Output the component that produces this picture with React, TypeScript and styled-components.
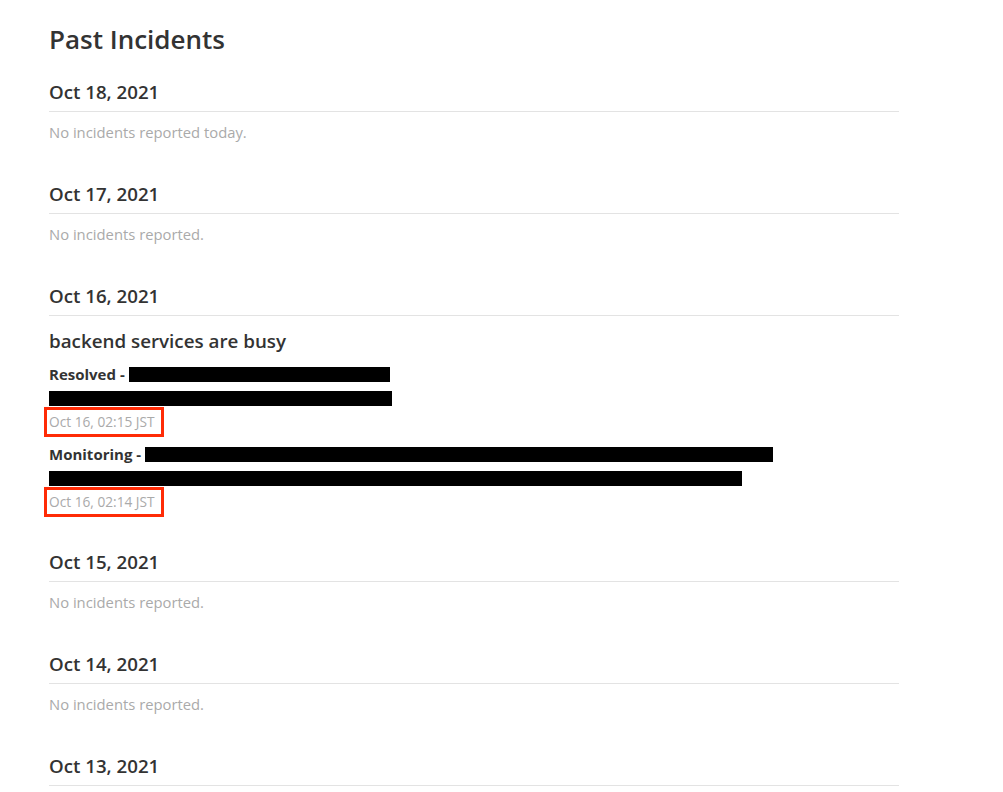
import React from "react";
import styled, { createGlobalStyle } from "styled-components";

const GlobalStyle = createGlobalStyle`
  html, body {
    margin: 0;
    padding: 0;
    background: #ffffff;
  }
  body {
    font-family: "Open Sans", "Liberation Sans", sans-serif;
    color: #333333;
    -webkit-font-smoothing: antialiased;
  }
`;

type Update = {
  status: string;
  lines: number[]; // right edge (from the text start) of each redacted line
  time: string;
};

type Day = {
  date: string;
  empty?: string;
  incident?: { title: string; updates: Update[] };
};

const days: Day[] = [
  { date: "Oct 18, 2021", empty: "No incidents reported today." },
  { date: "Oct 17, 2021", empty: "No incidents reported." },
  {
    date: "Oct 16, 2021",
    incident: {
      title: "backend services are busy",
      updates: [
        { status: "Resolved", lines: [341, 343], time: "Oct 16, 02:15 JST" },
        { status: "Monitoring", lines: [724, 693], time: "Oct 16, 02:14 JST" },
      ],
    },
  },
  { date: "Oct 15, 2021", empty: "No incidents reported." },
  { date: "Oct 14, 2021", empty: "No incidents reported." },
  { date: "Oct 13, 2021", empty: "No incidents reported." },
];

const Page = styled.div`
  width: 850px;
  padding: 23px 0 0 49px;
`;

const Title = styled.h2`
  margin: 0 0 25px;
  font-size: 26px;
  line-height: 32px;
  font-weight: 600;
  color: #333333;
`;

const DaySection = styled.section<{ $incident?: boolean }>`
  margin-bottom: ${(p) => (p.$incident ? 36 : 40)}px;
`;

const DateHeader = styled.h3`
  margin: 0;
  padding-bottom: 7px;
  border-bottom: 1px solid #e3e3e3;
  font-size: 18.7px;
  line-height: 24px;
  font-weight: 600;
  color: #333333;
`;

const Empty = styled.p`
  margin: 10px 0 0;
  font-size: 14.8px;
  line-height: 20px;
  color: #aaaaaa;
`;

const Incident = styled.div`
  padding-top: 13px;
`;

const IncidentTitle = styled.h4`
  margin: 0 0 9px;
  font-size: 18.8px;
  line-height: 24px;
  font-weight: 600;
  color: #333333;
`;

const UpdateBlock = styled.div`
  margin-bottom: 8px;
`;

const Line = styled.div<{ $w: number }>`
  width: ${(p) => p.$w}px;
  height: 24px;
  display: flex;
  align-items: center;
  font-size: 15px;
  color: #333333;
`;

const Status = styled.strong`
  font-weight: 700;
  white-space: nowrap;
`;

const Redacted = styled.span`
  flex: 1;
  height: 15px;
  background: #000000;
  margin-top: 1px;
`;

const Stamp = styled.div`
  font-size: 13.7px;
  line-height: 24px;
  color: #aaaaaa;
`;

const Marked = styled.span`
  position: relative;
  &::after {
    content: "";
    position: absolute;
    left: -5px;
    top: -5px;
    width: 114px;
    height: 24px;
    border: 3px solid #ff2b06;
  }
`;

export default function App() {
  return (
    <>
      <GlobalStyle />
      <Page>
        <Title>Past Incidents</Title>
        {days.map((d) => (
          <DaySection key={d.date} $incident={!!d.incident}>
            <DateHeader>{d.date}</DateHeader>
            {d.empty && <Empty>{d.empty}</Empty>}
            {d.incident && (
              <Incident>
                <IncidentTitle>{d.incident.title}</IncidentTitle>
                {d.incident.updates.map((u) => (
                  <UpdateBlock key={u.time}>
                    <Line $w={u.lines[0]}>
                      <Status>{u.status} -&nbsp;</Status>
                      <Redacted />
                    </Line>
                    <Line $w={u.lines[1]}>
                      <Redacted />
                    </Line>
                    <Stamp>
                      <Marked>{u.time}</Marked>
                    </Stamp>
                  </UpdateBlock>
                ))}
              </Incident>
            )}
          </DaySection>
        ))}
      </Page>
    </>
  );
}
